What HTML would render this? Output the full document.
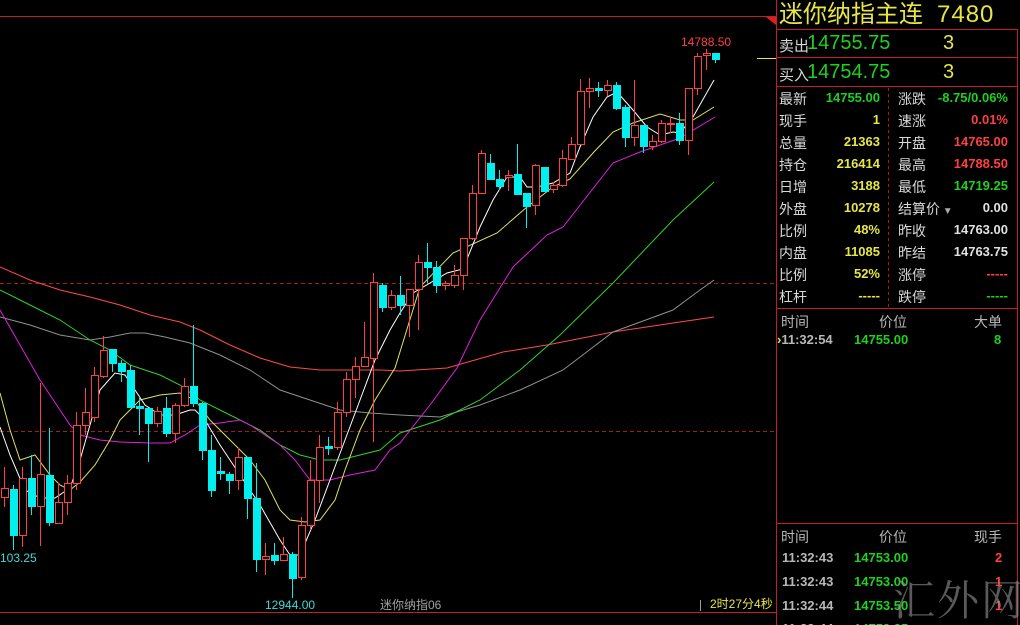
<!DOCTYPE html>
<html><head><meta charset="utf-8"><style>
html,body{margin:0;padding:0;background:#000;width:1020px;height:625px;overflow:hidden;position:relative;font-family:"Liberation Sans","Noto Sans CJK SC",sans-serif}
.a{position:absolute;white-space:nowrap}
.lb{color:#d8d8d8;font-size:14px}
.v{font-size:13px;font-weight:bold;text-align:right}
.y{color:#e6e646}.g{color:#1fd01f}.r{color:#ff4040}.w{color:#e0e0e0}.gr{color:#b8b8b8}
</style></head><body>
<svg class="a" style="left:0;top:0" width="1020" height="625">
<line x1="0" y1="16.5" x2="776" y2="16.5" stroke="#c02020"/>
<polygon points="766,17 776,17 776,25" fill="#e02020"/>
<line x1="776.5" y1="0" x2="776.5" y2="625" stroke="#c02020"/>
<line x1="0" y1="612.5" x2="776" y2="612.5" stroke="#c02020"/>
<line x1="0" y1="283.5" x2="776" y2="283.5" stroke="#a02020" stroke-dasharray="4,3"/>
<line x1="0" y1="431.5" x2="776" y2="431.5" stroke="#a02020" stroke-dasharray="4,3"/>
<line x1="757" y1="58.5" x2="776" y2="58.5" stroke="#e6e646"/>
<g fill="none" stroke-width="1">
<polyline stroke="#ff4a4a" points="0,267 30,280 60,290 90,297 120,305 150,315 180,322 200,330 230,345 260,358 290,367 320,370 350,370 380,370 400,371 447,368 503,352 547,345 613,332 673,323 714,317"/>
<polyline stroke="#909090" points="0,317 30,325 60,335 90,340 110,337 130,333 145,333 165,337 190,343 220,355 250,370 280,390 310,400 340,410 370,413 400,415 440,417 480,405 520,390 563,370 613,332 673,310 700,290 714,280"/>
<polyline stroke="#30d030" points="0,290 30,305 60,320 90,340 110,350 130,365 160,375 180,385 200,400 230,415 260,430 280,445 300,455 320,460 340,460 360,455 380,450 400,433 440,420 480,400 520,370 560,335 613,283 673,220 714,182"/>
<polyline stroke="#e020e0" points="0,310 20,345 40,380 60,410 70,425 80,435 100,440 120,442 150,443 170,443 185,435 200,425 220,423 240,420 250,425 265,435 280,445 295,460 310,480 330,480 350,475 375,470 390,450 400,443 430,405 457,368 480,320 513,267 547,235 563,227 613,163 640,152 660,145 680,138 715,117"/>
<polyline stroke="#e0e060" points="0,393 10,430 20,460 35,455 50,475 60,485 70,490 80,482 95,465 110,440 120,420 140,400 160,395 180,393 195,400 210,420 230,440 250,460 265,480 280,510 290,520 305,522 320,520 335,500 345,470 360,430 375,400 395,368 420,287 453,253 497,233 527,207 553,187 570,179 593,153 613,132 633,123 660,114 680,120 693,120 714,107"/>
<polyline stroke="#ffffff" points="0,427 10,455 25,490 40,498 55,498 70,488 80,460 90,425 100,390 115,373 125,375 135,390 145,405 160,415 175,415 190,410 195,410 205,420 220,445 240,475 260,505 280,540 290,555 300,555 315,520 330,480 345,440 360,400 375,360 390,330 400,313 413,293 447,273 463,269 480,227 493,200 507,177 520,177 527,187 537,187 553,183 570,173 580,147 593,117 607,97 617,92 633,110 647,127 660,135 673,132 680,133 693,117 714,80"/>
</g>
<g id="c"></g>
<text x="0" y="562" fill="#40d8d8" font-size="12" font-family="Liberation Sans">103.25</text>
<text x="265" y="609" fill="#40d8d8" font-size="12" font-family="Liberation Sans">12944.00</text>
<text x="681" y="46" fill="#ff4040" font-size="12" font-family="Liberation Sans">14788.50</text>
<text x="380" y="609" fill="#a0a0a0" font-size="12" font-family="Liberation Sans,Noto Sans CJK SC,sans-serif">迷你纳指06</text>
<text x="710" y="608" fill="#e6e646" font-size="12" font-family="Liberation Sans,Noto Sans CJK SC,sans-serif">2时27分4秒</text>
<line x1="700.5" y1="600" x2="700.5" y2="611" stroke="#a0a0a0"/>
<line x1="776" y1="29.5" x2="1017" y2="29.5" stroke="#c02020"/>
<line x1="776" y1="57.5" x2="1017" y2="57.5" stroke="#c02020"/>
<line x1="776" y1="86.5" x2="1017" y2="86.5" stroke="#c02020"/>
<line x1="1017.5" y1="29" x2="1017.5" y2="625" stroke="#c02020"/>
<line x1="888.5" y1="88" x2="888.5" y2="307" stroke="#a02020" stroke-dasharray="3,3"/>
<line x1="776" y1="308.5" x2="1017" y2="308.5" stroke="#c02020"/>
<line x1="776" y1="523.5" x2="1017" y2="523.5" stroke="#c02020"/>
</svg>
<script>
var d=[[4,'r',488,497,467,507],[13,'c',489,535,485,550],[22,'r',478,535,467,547],[31,'c',478,506,455,515],[40,'r',474,506,383,546],[49,'c',475,522,428,526],[58,'r',502,523,483,523],[67,'r',483,502,475,515],[76,'r',425,483,412,490],[85,'r',412,425,388,435],[94,'r',375,417,367,422],[103,'r',350,376,336,378],[112,'c',349,363,349,372],[121,'c',363,371,360,382],[130,'c',370,407,365,407],[139,'c',406,408,398,435],[148,'c',408,423,408,462],[157,'r',411,423,407,427],[166,'c',408,433,397,437],[175,'r',405,433,403,443],[184,'r',386,405,378,407],[193,'c',386,403,325,407],[202,'c',403,450,402,460],[211,'c',450,490,435,497],[220,'c',471,473,457,480],[229,'c',474,480,472,494],[238,'r',457,480,448,490],[247,'c',457,498,457,519],[256,'c',498,559,463,572],[265,'r',556,559,543,575],[274,'c',555,560,543,565],[283,'r',554,560,537,560],[292,'c',554,578,552,598],[301,'r',525,577,517,580],[310,'r',480,525,460,530],[319,'r',447,480,435,503],[328,'c',446,448,437,455],[337,'r',412,447,402,450],[346,'r',379,412,372,417],[355,'r',366,379,357,398],[364,'r',357,366,322,367],[373,'r',282,358,273,442],[382,'c',285,307,283,312],[391,'r',295,307,290,310],[400,'c',295,305,276,315],[409,'r',289,305,289,337],[418,'r',262,289,255,330],[427,'c',262,267,243,283],[436,'c',267,285,261,293],[445,'r',283,285,281,290],[454,'r',275,285,265,288],[463,'r',238,275,238,290],[472,'r',193,238,185,240],[481,'r',153,193,150,193],[490,'c',163,179,154,180],[499,'c',179,186,170,190],[508,'r',175,177,170,191],[517,'c',174,194,144,195],[526,'c',193,206,193,228],[535,'r',165,205,164,215],[544,'c',167,191,167,191],[553,'r',185,189,182,193],[562,'r',158,185,150,187],[571,'r',144,159,137,160],[580,'r',91,144,79,145],[589,'r',88,91,78,108],[598,'c',88,90,82,97],[607,'r',85,90,80,96],[616,'c',85,108,82,110],[625,'c',107,137,105,147],[634,'r',125,137,80,146],[643,'c',125,146,125,153],[652,'r',141,146,135,150],[661,'r',123,141,120,143],[670,'r',123,124,117,133],[679,'c',123,140,113,145],[688,'r',88,140,88,155],[697,'r',56,88,53,95],[706,'r',53,55,49,70],[715,'c',53,59,53,63]];
var s='';d.forEach(function(e){var x=e[0],col=e[1]=='r'?'#ff4040':'#00f0f0';
s+='<line x1="'+(x+.5)+'" y1="'+e[4]+'" x2="'+(x+.5)+'" y2="'+e[5]+'" stroke="'+col+'"/>';
var h=Math.max(1,e[3]-e[2]);
if(e[1]=='r')s+='<rect x="'+(x-3)+'.5" y="'+(e[2]+.5)+'" width="7" height="'+h+'" fill="#000" stroke="'+col+'"/>';
else s+='<rect x="'+(x-3)+'" y="'+e[2]+'" width="8" height="'+(h+1)+'" fill="'+col+'"/>';});
document.getElementById('c').innerHTML=s;
</script>
<div class="a y" style="left:779px;top:0px;font-size:24px;line-height:29px">迷你纳指主连<span style="margin-left:14px;letter-spacing:1px">7480</span></div>
<div class="a lb" style="left:779px;top:35px;font-size:15px">卖出</div>
<div class="a g" style="left:807px;top:32px;font-size:20px">14755.75</div>
<div class="a y" style="left:943px;top:32px;font-size:20px">3</div>
<div class="a lb" style="left:779px;top:64px;font-size:15px">买入</div>
<div class="a g" style="left:807px;top:61px;font-size:20px">14754.75</div>
<div class="a y" style="left:943px;top:61px;font-size:20px">3</div>
<div class="a" style="left:778px;top:89px;width:240px">
<div style="position:relative;height:22px"><span class="a lb" style="left:1px">最新</span><span class="a v g" style="right:138px;top:1px">14755.00</span><span class="a lb" style="left:120px">涨跌</span><span class="a v g" style="right:10px;top:1px">-8.75/0.06%</span></div>
<div style="position:relative;height:22px"><span class="a lb" style="left:1px">现手</span><span class="a v y" style="right:138px;top:1px">1</span><span class="a lb" style="left:120px">速涨</span><span class="a v r" style="right:10px;top:1px">0.01%</span></div>
<div style="position:relative;height:22px"><span class="a lb" style="left:1px">总量</span><span class="a v y" style="right:138px;top:1px">21363</span><span class="a lb" style="left:120px">开盘</span><span class="a v r" style="right:10px;top:1px">14765.00</span></div>
<div style="position:relative;height:22px"><span class="a lb" style="left:1px">持仓</span><span class="a v y" style="right:138px;top:1px">216414</span><span class="a lb" style="left:120px">最高</span><span class="a v r" style="right:10px;top:1px">14788.50</span></div>
<div style="position:relative;height:22px"><span class="a lb" style="left:1px">日增</span><span class="a v y" style="right:138px;top:1px">3188</span><span class="a lb" style="left:120px">最低</span><span class="a v g" style="right:10px;top:1px">14719.25</span></div>
<div style="position:relative;height:22px"><span class="a lb" style="left:1px">外盘</span><span class="a v y" style="right:138px;top:1px">10278</span><span class="a lb" style="left:120px">结算价<span style="color:#aaa;font-size:10px"> ▼</span></span><span class="a v w" style="right:10px;top:1px">0.00</span></div>
<div style="position:relative;height:22px"><span class="a lb" style="left:1px">比例</span><span class="a v y" style="right:138px;top:1px">48%</span><span class="a lb" style="left:120px">昨收</span><span class="a v w" style="right:10px;top:1px">14763.00</span></div>
<div style="position:relative;height:22px"><span class="a lb" style="left:1px">内盘</span><span class="a v y" style="right:138px;top:1px">11085</span><span class="a lb" style="left:120px">昨结</span><span class="a v w" style="right:10px;top:1px">14763.75</span></div>
<div style="position:relative;height:22px"><span class="a lb" style="left:1px">比例</span><span class="a v y" style="right:138px;top:1px">52%</span><span class="a lb" style="left:120px">涨停</span><span class="a v r" style="right:10px;top:1px">-----</span></div>
<div style="position:relative;height:22px"><span class="a lb" style="left:1px">杠杆</span><span class="a v y" style="right:138px;top:1px">-----</span><span class="a lb" style="left:120px">跌停</span><span class="a v g" style="right:10px;top:1px">-----</span></div>
</div>
<div class="a gr" style="left:781px;top:312px;font-size:14px">时间</div>
<div class="a gr" style="left:879px;top:312px;font-size:14px">价位</div>
<div class="a gr" style="left:974px;top:312px;font-size:14px">大单</div>
<div class="a" style="left:777px;top:332px;font-size:13px;font-weight:bold"><span class="y">›</span><span class="gr">11:32:54</span></div>
<div class="a v g" style="left:854px;top:332px">14755.00</div>
<div class="a v g" style="left:994px;top:332px">8</div>
<div class="a gr" style="left:781px;top:527px;font-size:14px">时间</div>
<div class="a gr" style="left:879px;top:527px;font-size:14px">价位</div>
<div class="a gr" style="left:974px;top:527px;font-size:14px">现手</div>
<div class="a v gr" style="left:782px;top:550px">11:32:43</div><div class="a v g" style="left:854px;top:550px">14753.00</div><div class="a v r" style="left:995px;top:550px">2</div>
<div class="a v gr" style="left:782px;top:574px">11:32:43</div><div class="a v g" style="left:854px;top:574px">14753.00</div><div class="a v r" style="left:995px;top:574px">1</div>
<div class="a v gr" style="left:782px;top:598px">11:32:44</div><div class="a v g" style="left:854px;top:598px">14753.50</div><div class="a v r" style="left:995px;top:598px">1</div>
<div class="a v gr" style="left:782px;top:621px">11:32:44</div><div class="a v g" style="left:854px;top:621px">14753.25</div>
<div class="a" style="left:893px;top:568px;font-size:42px;color:rgba(150,150,150,0.6);font-family:'Noto Serif CJK SC',serif;letter-spacing:2px">汇外网</div>
</body></html>
